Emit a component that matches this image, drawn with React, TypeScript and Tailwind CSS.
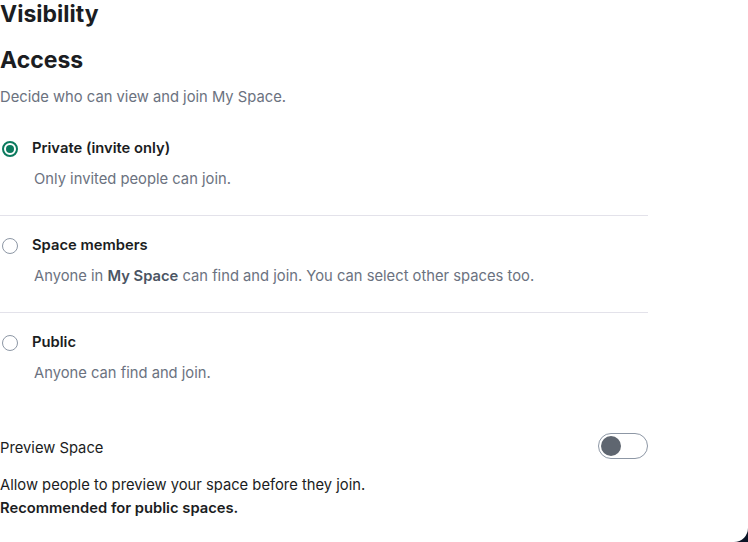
import React, { useState } from 'react';

type Access = 'private' | 'members' | 'public';

const Radio: React.FC<{ checked: boolean }> = ({ checked }) => (
  <span
    className={`mt-[1px] flex h-4 w-4 shrink-0 items-center justify-center rounded-full border ${
      checked ? 'border-[#0b7a5e] border-2' : 'border-[#8d97a5]'
    }`}
  >
    {checked && <span className="h-2 w-2 rounded-full bg-[#0b7a5e]" />}
  </span>
);

export default function App() {
  const [access, setAccess] = useState<Access>('private');
  const [preview, setPreview] = useState(false);

  const options: { id: Access; title: string; desc: React.ReactNode }[] = [
    { id: 'private', title: 'Private (invite only)', desc: 'Only invited people can join.' },
    {
      id: 'members',
      title: 'Space members',
      desc: (
        <>
          Anyone in <b className="font-semibold text-[#4b5563]">My Space</b> can find and join. You can select other
          spaces too.
        </>
      ),
    },
    { id: 'public', title: 'Public', desc: 'Anyone can find and join.' },
  ];

  return (
    <div className="min-h-screen bg-[#0b1426] font-['Inter','Noto_Sans',sans-serif]">
      <div className="h-[542px] w-[748px] overflow-hidden rounded-br-[14px] bg-white text-[#1b1d22]">
        <div className="w-[648px]">
          <h1 className="-mt-[1px] text-[23px] font-bold leading-[30px]">Visibility</h1>

          {/* Access */}
          <h2 className="mt-4 text-[23px] font-bold leading-[30px]">Access</h2>
          <p className="mt-[11px] text-[14.75px] leading-[22px] text-[#6b7280]">
            Decide who can view and join My Space.
          </p>

          <div className="mt-[29px]">
            {options.map((o, i) => (
              <div
                key={o.id}
                onClick={() => setAccess(o.id)}
                className={`cursor-pointer ${i < options.length - 1 ? 'border-b border-[#e3e2ea] pb-[25px]' : ''} ${
                  i > 0 ? 'pt-[18px]' : ''
                }`}
              >
                <div className="flex items-center gap-[14px] pl-[2px]">
                  <Radio checked={access === o.id} />
                  <span className="text-[14.75px] font-semibold leading-[22px]">{o.title}</span>
                </div>
                <p className="mt-[9px] pl-[34px] text-[14.75px] leading-[22px] text-[#6b7280]">{o.desc}</p>
              </div>
            ))}
          </div>

          {/* Preview */}
          <div className="mt-[53px] flex items-center justify-between">
            <span className="text-[14.75px] leading-[22px]">Preview Space</span>
            <button
              onClick={() => setPreview(!preview)}
              className={`-mt-[4px] flex h-[26px] w-[50px] items-center rounded-full border px-[2px] ${
                preview ? 'justify-end border-[#0b7a5e] bg-[#0b7a5e]' : 'border-[#8d97a5] bg-white'
              }`}
            >
              <span className={`h-5 w-5 rounded-full ${preview ? 'bg-white' : 'bg-[#5f6670]'}`} />
            </button>
          </div>
          <p className="mt-[15px] text-[14.75px] leading-[23px] text-[#1b1d22]">
            Allow people to preview your space before they join.
            <br />
            <b className="font-semibold">Recommended for public spaces.</b>
          </p>
        </div>
      </div>
    </div>
  );
}
